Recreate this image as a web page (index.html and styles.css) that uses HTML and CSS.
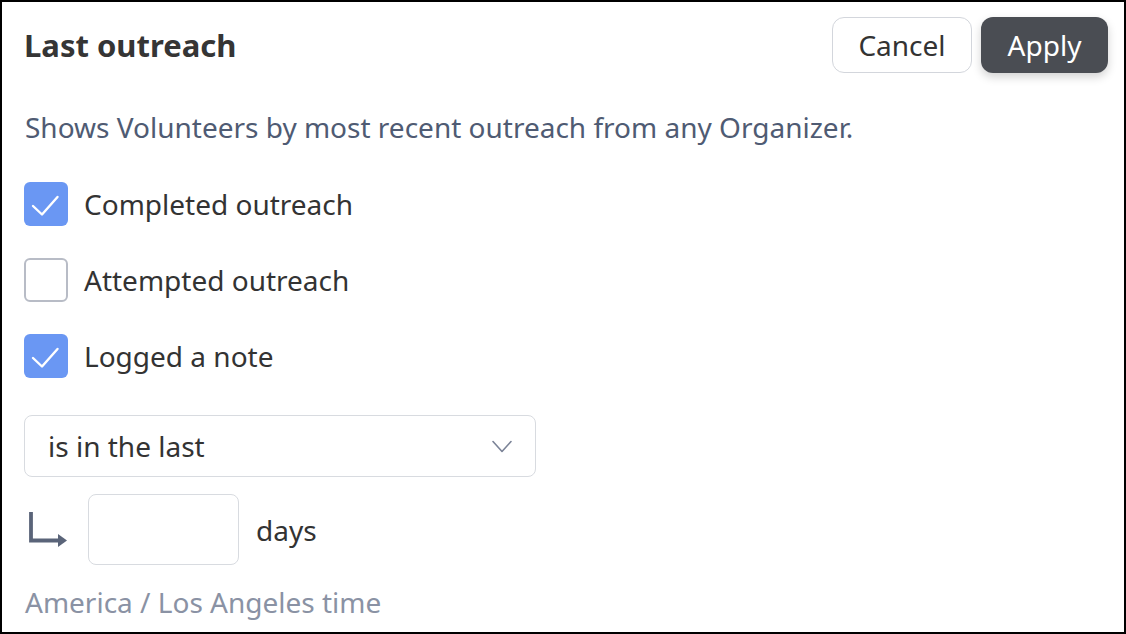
FILE: index.html
```html
<!DOCTYPE html>
<html>
<head>
<meta charset="utf-8">
<link rel="stylesheet" href="styles.css">
</head>
<body>
<div class="panel">
  <div class="header">
    <h1 class="title">Last outreach</h1>
    <div class="actions">
      <button class="btn btn-cancel">Cancel</button>
      <button class="btn btn-apply">Apply</button>
    </div>
  </div>
  <p class="desc">Shows Volunteers by most recent outreach from any Organizer.</p>
  <div class="checks">
    <label class="check">
      <span class="box box-on"><svg width="44" height="44" viewBox="0 0 44 44"><path d="M9 24 L18 32.5 L33.5 15" fill="none" stroke="#fff" stroke-width="2.4" stroke-linecap="round" stroke-linejoin="round"/></svg></span>
      <span class="check-label">Completed outreach</span>
    </label>
    <label class="check">
      <span class="box box-off"></span>
      <span class="check-label">Attempted outreach</span>
    </label>
    <label class="check">
      <span class="box box-on"><svg width="44" height="44" viewBox="0 0 44 44"><path d="M9 24 L18 32.5 L33.5 15" fill="none" stroke="#fff" stroke-width="2.4" stroke-linecap="round" stroke-linejoin="round"/></svg></span>
      <span class="check-label">Logged a note</span>
    </label>
  </div>
  <div class="select">
    <span class="select-text">is in the last</span>
    <svg class="chevron" width="20" height="13" viewBox="0 0 20 13"><path d="M1 1.5 L10 11.5 L19 1.5" fill="none" stroke="#7b8397" stroke-width="1.6" stroke-linecap="round" stroke-linejoin="round"/></svg>
  </div>
  <div class="days-row">
    <svg class="arrow" width="44" height="36" viewBox="0 0 44 36"><path d="M7 0 V28.5 H36" fill="none" stroke="#5a6479" stroke-width="3.8"/><path d="M34 22 L43 28.5 L34 35 Z" fill="#5a6479"/></svg>
    <div class="days-input"></div>
    <span class="days-label">days</span>
  </div>
  <p class="tz">America / Los Angeles time</p>
</div>
</body>
</html>
```
FILE: styles.css
```css
html, body {
  margin: 0;
  padding: 0;
  background: #fff;
}
body {
  font-family: "Noto Sans", "Open Sans", sans-serif;
  color: #333;
}
.panel {
  box-sizing: border-box;
  width: 1126px;
  height: 634px;
  border: 2px solid #000;
  padding: 15px 16px 0 22px;
  overflow: hidden;
}
.header {
  display: flex;
  align-items: center;
  justify-content: space-between;
  height: 56px;
}
.title {
  margin: 0;
  font-size: 31px;
  font-weight: 700;
  color: #353535;
}
.actions {
  display: flex;
  gap: 9px;
}
.btn {
  box-sizing: border-box;
  height: 56px;
  border-radius: 12px;
  font-family: inherit;
  font-size: 28px;
  padding: 0;
}
.btn-cancel {
  width: 140px;
  background: #fff;
  border: 1.5px solid #d3d6dc;
  color: #333;
}
.btn-apply {
  width: 127px;
  background: #4a4d53;
  border: none;
  color: #fff;
  box-shadow: 0 4px 10px rgba(0, 0, 0, 0.18);
}
.desc {
  margin: 37px 0 0 1px;
  font-size: 28px;
  line-height: 34px;
  color: #4f5b73;
}
.checks {
  margin-top: 38px;
  display: flex;
  flex-direction: column;
  gap: 32px;
}
.check {
  display: flex;
  align-items: center;
  height: 44px;
}
.box {
  box-sizing: border-box;
  width: 44px;
  height: 44px;
  border-radius: 6px;
  flex: none;
  display: flex;
}
.box-on {
  background: #6a97f3;
}
.box-off {
  border: 2px solid #b8bcc6;
  background: #fff;
}
.check-label {
  margin-left: 16px;
  font-size: 28px;
  color: #333;
}
.select {
  box-sizing: border-box;
  margin-top: 37px;
  width: 512px;
  height: 62px;
  border: 1.5px solid #d8dbe0;
  border-radius: 8px;
  display: flex;
  align-items: center;
  justify-content: space-between;
  padding: 0 23px 0 23px;
}
.select-text {
  font-size: 28px;
  color: #333;
}
.days-row {
  margin-top: 17px;
  display: flex;
  align-items: center;
  height: 71px;
}
.arrow {
  margin-left: 0;
  margin-right: 20px;
}
.days-input {
  box-sizing: border-box;
  width: 151px;
  height: 71px;
  border: 1.5px solid #d8dbe0;
  border-radius: 8px;
}
.days-label {
  margin-left: 17px;
  font-size: 28px;
  color: #333;
}
.tz {
  margin: 20px 0 0 1px;
  font-size: 28px;
  line-height: 34px;
  color: #8a92a4;
}
```
